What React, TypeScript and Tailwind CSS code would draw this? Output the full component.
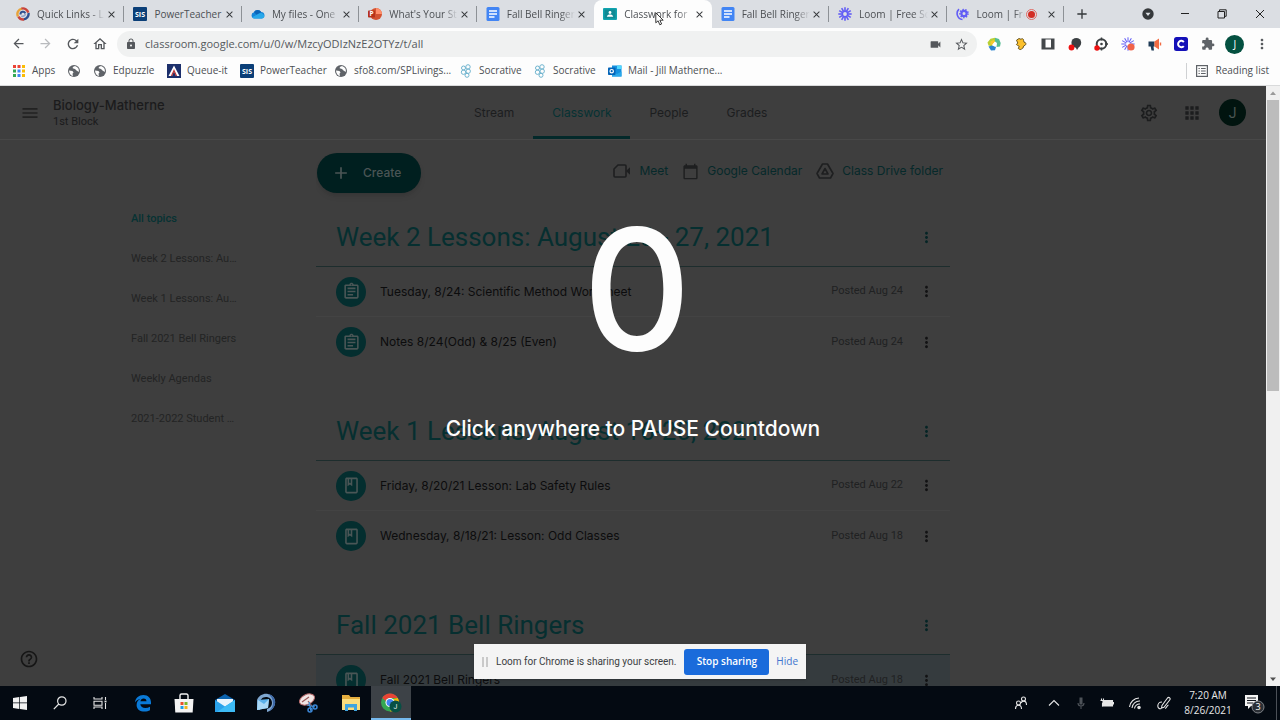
import type { ReactNode } from "react";
import {
  MdAdd,
  MdApps,
  MdArrowBack,
  MdArrowForward,
  MdCalendarToday,
  MdClose,
  MdExtension,
  MdHelpOutline,
  MdLock,
  MdMenu,
  MdMoreVert,
  MdOutlineAssignment,
  MdOutlineClass,
  MdOutlineHome,
  MdOutlineSettings,
  MdRefresh,
  MdStarBorder,
  MdVideocam,
} from "react-icons/md";

/* ---------- Favicons and brand marks ---------- */

function QuickLinksIcon() {
  return (
    <svg viewBox="0 0 14 14" className="size-[14px]" fill="none" strokeWidth="2.4">
      <path d="M2 9.5A5.5 5.5 0 0 1 6 1.6" stroke="#e8a33a" />
      <path d="M5.5 1.6a5.5 5.5 0 0 1 6.8 4" stroke="#c8443c" />
      <path d="M12.5 6a5.500 5.500 0 0 1-5 6.400" stroke="#2d4f8f" />
      <path d="M8 12.500a5.500 5.500 0 0 1-5.600-2.800" stroke="#c8443c" />
      <path d="M4.500 7.500a2.500 2.500 0 0 1 4.800-1.200" stroke="#2d4f8f" strokeWidth="2" />
      <path d="M9.300 7a2.500 2.500 0 0 1-4 1.800" stroke="#8fa4cc" strokeWidth="1.600" />
    </svg>
  );
}

function SisIcon() {
  return (
    <svg viewBox="0 0 14 14" className="size-[14px]">
      <rect width="14" height="14" rx="1" fill="#0b3f78" />
      <text x="7" y="9.500" textAnchor="middle" fontSize="7" fontWeight="700" fill="#fff" fontFamily="Open Sans, sans-serif">
        SIS
      </text>
    </svg>
  );
}

function OneDriveIcon() {
  return (
    <svg viewBox="0 0 14 14" className="size-[14px]">
      <path d="M3.500 11.500A3.200 3.200 0 0 1 3 5.200 4.200 4.200 0 0 1 10.200 5a3.300 3.300 0 0 1 .8 6.500z" fill="#1484d8" />
      <path d="M3 5.200A4.200 4.200 0 0 1 10.200 5L6 8z" fill="#0b64b8" />
      <path d="M1 10.200 8 6.600a3.500 3.500 0 0 1 5.300 3.400 2.600 2.600 0 0 1-2.300 1.500H3.500A3 3 0 0 1 1 10.200z" fill="#28a8ea" />
    </svg>
  );
}

function PowerPointIcon() {
  return (
    <svg viewBox="0 0 14 14" className="size-[14px]">
      <circle cx="8" cy="7" r="6" fill="#d35230" />
      <path d="M8 1a6 6 0 0 1 6 6H8z" fill="#ff8f6b" />
      <rect x="0" y="3.500" width="7" height="7" rx=".8" fill="#b7321a" />
      <text x="3.500" y="9.300" textAnchor="middle" fontSize="6.500" fontWeight="700" fill="#fff" fontFamily="Open Sans, sans-serif">
        P
      </text>
    </svg>
  );
}

function DocsIcon() {
  return (
    <svg viewBox="0 0 14 14" className="size-[14px]">
      <rect x=".5" width="13" height="14" rx="1.500" fill="#4285f4" />
      <path d="M3 4h8M3 7h8M3 10h5.500" stroke="#fff" strokeWidth="1.500" />
    </svg>
  );
}

function ClassroomIcon() {
  return (
    <svg viewBox="0 0 14 14" className="size-[14px]">
      <rect y="1" width="14" height="12" rx="1" fill="#12a4af" />
      <rect x="1.500" y="2.500" width="11" height="9" fill="#0f8a94" />
      <circle cx="7" cy="5.500" r="1.400" fill="#fff" />
      <path d="M3.800 9.800c.3-1.700 1.700-2.300 3.200-2.300s2.900.6 3.200 2.300z" fill="#fff" />
    </svg>
  );
}

const rays = [0, 30, 60, 90, 120, 150];

function LoomIcon() {
  return (
    <svg viewBox="0 0 14 14" className="size-[14px]" stroke="#625df5" strokeWidth="1.600">
      {rays.map((angle) => (
        <path key={angle} d="M7 .3v13.400" transform={`rotate(${angle} 7 7)`} />
      ))}
      <circle cx="7" cy="7" r="3.400" fill="#625df5" stroke="none" />
      <circle cx="7" cy="7" r="1.900" fill="#dee1e6" stroke="none" />
    </svg>
  );
}

function LoomSharingIcon() {
  return (
    <svg viewBox="0 0 14 14" className="size-[14px]" fill="none" stroke="#625df5">
      <path d="M3 2.200a6 6 0 0 0 3.500 10.300" strokeWidth="1.600" />
      <circle cx="8" cy="6.500" r="2.600" strokeWidth="2.200" />
      <circle cx="8" cy="6.500" r="4" strokeWidth="1.600" strokeDasharray="1.400 1.400" />
    </svg>
  );
}

function LoomExtensionIcon() {
  return (
    <svg viewBox="0 0 14 14" className="size-[14px]" stroke="#625df5" strokeWidth="1">
      {rays.map((angle) => (
        <path key={angle} d="M7 .3v13.400" transform={`rotate(${angle} 7 7)`} />
      ))}
      <circle cx="7" cy="7" r="2" fill="#fff" stroke="none" />
      <circle cx="10" cy="10" r="3.600" fill="#f0634a" stroke="none" />
    </svg>
  );
}

function AppsGridIcon() {
  const colours = ["#ea4335", "#ea4335", "#fbbc04", "#34a853", "#4285f4", "#fbbc04", "#34a853", "#4285f4", "#fbbc04"];
  return (
    <svg viewBox="0 0 12 12" className="size-3">
      {colours.map((colour, i) => (
        <rect key={i} x={(i % 3) * 4.5} y={Math.floor(i / 3) * 4.5} width="3" height="3" fill={colour} />
      ))}
    </svg>
  );
}

function QueueIcon() {
  return (
    <svg viewBox="0 0 14 14" className="size-[14px]">
      <rect width="14" height="14" fill="#1c2f6b" />
      <path d="M7 1.500 12.500 12H9L7 7 5 12H1.500z" fill="#fff" />
      <path d="m7 5 3.200 7H8.800L7 8l-1.800 4H3.800z" fill="#c03a3a" />
    </svg>
  );
}

function SocrativeIcon() {
  return (
    <svg viewBox="0 0 12 14" className="h-[14px] w-3" fill="none" stroke="#6fb4cf" strokeWidth="1">
      <circle cx="3.500" cy="4" r="2" />
      <circle cx="8" cy="2.900" r="2.200" />
      <circle cx="8.200" cy="7.200" r="2.200" />
      <circle cx="3.500" cy="8.200" r="2.200" />
      <circle cx="7" cy="11.300" r="2" />
    </svg>
  );
}

function OutlookIcon() {
  return (
    <svg viewBox="0 0 14 14" className="size-[14px]">
      <rect x="4" y="1.500" width="9.500" height="11" fill="#1490df" />
      <path d="M9 1.500h4.500V5H9z" fill="#50d9ff" />
      <path d="M4 7.500 9 10l4.500-2.500v5H4z" fill="#28a8ea" />
      <rect y="3.500" width="7.500" height="7.500" rx=".8" fill="#0364b8" />
      <circle cx="3.700" cy="7.200" r="1.700" fill="none" stroke="#fff" strokeWidth="1.200" />
    </svg>
  );
}

function ReadingListIcon() {
  return (
    <svg viewBox="0 0 12 12" className="size-3" fill="none" stroke="#5f6368">
      <rect x=".6" y=".6" width="10.800" height="10.800" strokeWidth="1.200" />
      <path d="M2.500 3.500h1.300M5 3.500h4.700M2.500 6h1.300M5 6h4.700M2.500 8.500h1.300M5 8.500h4.700" />
    </svg>
  );
}

/* ---------- Browser extensions ---------- */

const extensions: { name: string; icon: ReactNode }[] = [
  {
    name: "Color wheel",
    icon: (
      <svg viewBox="0 0 14 14" className="size-[14px]">
        <path d="M.5 5.500 3.500 1.800 8 .8 9 4 5.500 5.500 5 9.500 1.500 8.500z" fill="#b9cf35" />
        <path d="M8 .8 12 2l1.700 4-.7 3.500-3.500.5L10 6 8 4.500z" fill="#55bd93" />
        <path d="M1.500 9.500 5 8.500l4 1.500-1 3.200-4 .3z" fill="#2a83cf" />
        <path d="M3.500 4.500 6.500 3l1.500 1.500-2.500 3L3.500 8z" fill="#f7c832" />
        <path d="M5.500 7.500 8 5l1.500 3L7.500 9.500z" fill="#fff" />
      </svg>
    ),
  },
  {
    name: "Puzzle",
    icon: (
      <svg viewBox="0 0 14 14" className="size-[14px]">
        <path
          d="M2.500 3.200 5 1.500l2 .8c1-1.300 3-.3 2.600 1.300l.4 1.600c1.800-.3 2.600 2 1.200 3l-1.600.9-.6 2c-1.200.3-1.600 1.600-3 1.400l-1.700-1 .9-2.200c-.8-1-2.300-.7-2.800-1.800L3.800 6z"
          fill="#fbc02d"
          stroke="#5b4a16"
          strokeWidth=".9"
        />
      </svg>
    ),
  },
  {
    name: "Reader",
    icon: (
      <svg viewBox="0 0 14 14" className="size-[14px]">
        <path d="M.5 1.500h13v11H.5z" fill="#43474a" />
        <path d="M4.500 2.500h5.500v8H4.500z" fill="#fff" />
      </svg>
    ),
  },
  {
    name: "Mote",
    icon: (
      <svg viewBox="0 0 14 14" className="size-[14px]">
        <circle cx="8.300" cy="5.800" r="4.900" fill="#3c4043" />
        <path d="M7 9h4.500l-2.500 4z" fill="#3c4043" />
        <circle cx="3.500" cy="10.500" r="2.900" fill="#e11" />
      </svg>
    ),
  },
  {
    name: "Target",
    icon: (
      <svg viewBox="0 0 14 14" className="size-[14px]">
        <circle cx="7.500" cy="7" r="4.800" fill="none" stroke="#3c4043" strokeWidth="2" />
        <path d="M7.500.5v3M14 7h-3M7.500 13.500v-3" stroke="#3c4043" strokeWidth="1.500" />
        <circle cx="7.500" cy="7" r="1.300" fill="#3c4043" />
        <circle cx="3" cy="11" r="2.700" fill="#e11" />
      </svg>
    ),
  },
  { name: "Loom", icon: <LoomExtensionIcon /> },
  {
    name: "Megaphone",
    icon: (
      <svg viewBox="0 0 14 14" className="size-[14px]">
        <path d="M.5 4.500h6v5H5.500l.5 4H3.500l-.8-4H.5z" fill="#1f3b57" />
        <path d="M6.500 4.500 11 1.500v11L6.500 9.500z" fill="#f26b43" />
        <path d="M12.500 5.500v3" stroke="#f26b43" strokeWidth="1.400" />
      </svg>
    ),
  },
  {
    name: "Clever",
    icon: (
      <svg viewBox="0 0 14 14" className="size-[14px]">
        <rect width="14" height="14" rx="2.500" fill="#1410b8" />
        <path d="M9.800 5a3.200 3.200 0 1 0 0 4" fill="none" stroke="#fff" strokeWidth="2" />
      </svg>
    ),
  },
  { name: "Extensions", icon: <MdExtension className="size-[14px] text-[#5f6368]" /> },
];

/* ---------- Page icons ---------- */

function MeetIcon() {
  return (
    <svg viewBox="0 0 18 16" className="h-4 w-[18px] shrink-0" fill="none" stroke="#1e1f20" strokeWidth="1.600">
      <path d="M5 2h7a1 1 0 0 1 1 1v10a1 1 0 0 1-1 1H2a1 1 0 0 1-1-1V6z" />
      <path d="M13 8l4-3.800v7.600z" fill="#1e1f20" stroke="none" />
    </svg>
  );
}

function DriveIcon() {
  return (
    <svg viewBox="0 0 18 18" className="size-[18px] shrink-0" fill="none" stroke="#1e1f20" strokeWidth="1.600" strokeLinejoin="round">
      <path d="M6.500 2h5L17 11.500 14.500 16h-11L1 11.500z" />
      <path d="M9 6.500 12 12H6z" />
    </svg>
  );
}

/* ---------- Browser chrome ---------- */

const tabs: { title: string; icon: ReactNode; active?: boolean; divider?: boolean; recording?: boolean }[] = [
  { title: "Quick Links - L", icon: <QuickLinksIcon />, divider: true },
  { title: "PowerTeacher", icon: <SisIcon />, divider: true },
  { title: "My files - One", icon: <OneDriveIcon />, divider: true },
  { title: "What's Your St", icon: <PowerPointIcon />, divider: true },
  { title: "Fall Bell Ringer", icon: <DocsIcon /> },
  { title: "Classwork for", icon: <ClassroomIcon />, active: true },
  { title: "Fall Bell Ringer", icon: <DocsIcon />, divider: true },
  { title: "Loom | Free Sc", icon: <LoomIcon />, divider: true },
  { title: "Loom | Fre", icon: <LoomSharingIcon />, divider: true, recording: true },
];

function TabStrip() {
  return (
    <div className="flex h-7 shrink-0 items-stretch bg-[#dbdee3] pl-[7px]">
      <div role="tablist" className="flex min-w-0 max-w-[1057px] flex-1">
        {tabs.map((tab, i) => (
          <div
            key={i}
            role="tab"
            aria-selected={!!tab.active}
            className={`relative flex min-w-0 flex-1 items-center gap-px pr-[7px] pl-[9px] ${
              tab.active ? "rounded-t-lg bg-[#fdfdfd]" : ""
            }`}
          >
            <span className="mr-[6px] shrink-0">{tab.icon}</span>
            <span
              className={`min-w-0 flex-1 overflow-hidden whitespace-nowrap text-[#4c4f53] ${
                tab.title === "PowerTeacher" ? "" : "[mask-image:linear-gradient(to_right,#000_78%,transparent)]"
              }`}
            >
              {tab.title}
            </span>
            {tab.recording && (
              <span className="mr-2 flex size-[11px] shrink-0 items-center justify-center rounded-full border border-[#e06a63]">
                <span className="size-[7px] rounded-full bg-[#d22d24]" />
              </span>
            )}
            <button aria-label="Close tab" className="shrink-0 text-[#35383b]">
              <MdClose className="size-[11px]" />
            </button>
            {tab.divider && <span className="absolute top-[6px] right-0 h-4 w-px bg-[#8d9196]" />}
          </div>
        ))}
      </div>
      <button aria-label="New tab" className="ml-[10px] text-[#35383b]">
        <MdAdd className="size-4" />
      </button>
      <div className="ml-auto flex items-center">
        <button aria-label="Search tabs" className="flex w-[37px] justify-center">
          <svg viewBox="0 0 12 12" className="size-3">
            <circle cx="6" cy="6" r="5.700" fill="#35383b" />
            <path d="M3.500 4.800h5L6 8z" fill="#dbdee3" />
          </svg>
        </button>
        <button aria-label="Minimize" className="flex w-[37px] justify-center">
          <svg viewBox="0 0 10 10" className="size-[10px]" stroke="#222">
            <path d="M1 4.500h8" />
          </svg>
        </button>
        <button aria-label="Restore" className="flex w-[37px] justify-center">
          <svg viewBox="0 0 10 10" className="size-[10px]" fill="none" stroke="#222">
            <path d="M1 2.500h6.500v6.500H1zM2.500 2.500V.8h6.700v6.500H7.500" />
          </svg>
        </button>
        <button aria-label="Close window" className="flex w-10 justify-center">
          <svg viewBox="0 0 10 10" className="size-[10px]" stroke="#222">
            <path d="m1 1 8 8M9 1 1 9" />
          </svg>
        </button>
      </div>
    </div>
  );
}

function Toolbar() {
  return (
    <div className="flex h-8 shrink-0 items-center bg-[#fdfdfd] pl-[5px]">
      <div className="flex w-[112px] text-[#55585c]">
        <button aria-label="Back" className="flex w-[27px] justify-center">
          <MdArrowBack className="size-[15px]" />
        </button>
        <button aria-label="Forward" className="flex w-[27px] justify-center text-[#b9bbbe]">
          <MdArrowForward className="size-[15px]" />
        </button>
        <button aria-label="Reload" className="flex w-[27px] justify-center">
          <MdRefresh className="size-[16px]" />
        </button>
        <button aria-label="Home" className="flex w-[27px] justify-center">
          <MdOutlineHome className="size-[16px]" />
        </button>
      </div>
      <div className="flex h-[26px] min-w-0 flex-1 items-center rounded-full bg-[#f0f1f1] pr-2 pl-2">
        <MdLock className="size-3 shrink-0 text-[#55585c]" />
        <input
          aria-label="Address"
          className="ml-2 min-w-0 flex-1 bg-transparent text-[11px] text-[#55595d] outline-none"
          defaultValue="classroom.google.com/u/0/w/MzcyODIzNzE2OTYz/t/all"
        />
        <MdVideocam className="size-[13px] shrink-0 text-[#55585c]" />
        <button aria-label="Bookmark this page" className="ml-3 shrink-0 text-[#55585c]">
          <MdStarBorder className="size-[15px]" />
        </button>
      </div>
      <div className="mr-[5px] ml-1 grid w-[294px] shrink-0 grid-cols-11 items-center">
        {extensions.map((ext) => (
          <button key={ext.name} aria-label={ext.name} className="flex justify-center">
            {ext.icon}
          </button>
        ))}
        <button
          aria-label="Profile"
          className="flex size-[19px] items-center justify-center justify-self-center rounded-full bg-[#045040] text-[10px] text-white"
        >
          J
        </button>
        <button aria-label="Browser menu" className="flex justify-center text-[#55585c]">
          <MdMoreVert className="size-4" />
        </button>
      </div>
    </div>
  );
}

/* Shaded globe used for sites without a favicon */
const globe = (
  <svg viewBox="0 0 14 14" className="size-[14px]">
    <circle cx="7" cy="7" r="6" fill="#5f6368" />
    <path d="M2 6.500 5.500 7l1 1.500-1 1.300L6 12C3.800 11.700 2 9.500 2 6.500zM8 2c-1.500.5-2.500 1-2.300 2.200L8 5l1.500 1.500L11.800 8c.6-2.500-.8-5.200-3.800-6z" fill="#fdfdfd" />
  </svg>
);

const bookmarks: { label: string; icon: ReactNode; width: string }[] = [
  { label: "Apps", icon: <AppsGridIcon />, width: "w-[55px]" },
  { label: "", icon: globe, width: "w-[26px]" },
  { label: "Edpuzzle", icon: globe, width: "w-[74px]" },
  { label: "Queue-it", icon: <QueueIcon />, width: "w-[73px]" },
  { label: "PowerTeacher", icon: <SisIcon />, width: "w-[94px]" },
  { label: "sfo8.com/SPLivings...", icon: globe, width: "w-[125px]" },
  { label: "Socrative", icon: <SocrativeIcon />, width: "w-[74px]" },
  { label: "Socrative", icon: <SocrativeIcon />, width: "w-[75px]" },
  { label: "Mail - Jill Matherne...", icon: <OutlookIcon />, width: "w-[130px]" },
];

function BookmarksBar() {
  return (
    <div className="flex h-[26px] shrink-0 items-center border-b border-[#d9dadb] bg-[#fdfdfd] pb-1 pl-3 text-[#4c4f53]">
      {bookmarks.map((b, i) => (
        <a
          key={i}
          href="#bookmark"
          aria-label={b.label || "Bookmark"}
          className={`flex shrink-0 items-center gap-[6px] whitespace-nowrap ${b.width}`}
        >
          <span className="flex w-[14px] shrink-0 justify-center">{b.icon}</span>
          {b.label}
        </a>
      ))}
      <button className="ml-auto flex h-4 items-center gap-[7px] border-l border-[#cfd1d3] pr-[11px] pl-[9px] whitespace-nowrap">
        <ReadingListIcon />
        Reading list
      </button>
    </div>
  );
}

/* ---------- Classroom page ---------- */

function PageHeader() {
  const link = "flex items-center border-b-3 border-transparent px-[19px] pt-[3px]";
  return (
    <header className="flex h-[54px] shrink-0 border-b border-[#484848]">
      <div className="flex w-[455px] items-center pl-5">
        <button aria-label="Main menu" className="text-[#222]">
          <MdMenu className="size-5" />
        </button>
        <div className="ml-[13px] pt-px text-[#1b1b1c]">
          <h1 className="text-[13px] leading-[18px] font-medium">Biology-Matherne</h1>
          <p className="font-[Roboto,sans-serif] text-[11px] leading-4">1st Block</p>
        </div>
      </div>
      <nav className="flex text-xs text-[#1c1d1e]">
        <a href="#stream" className={link}>Stream</a>
        <a href="#classwork" className="flex items-center rounded-t-xs border-b-3 border-[#03292a] px-[19px] pt-[3px] text-[#063233]">
          Classwork
        </a>
        <a href="#people" className={link}>People</a>
        <a href="#grades" className={link}>Grades</a>
      </nav>
      <div className="ml-auto flex items-center pr-5 text-[#1c1d1e]">
        <button aria-label="Settings">
          <MdOutlineSettings className="size-5" />
        </button>
        <button aria-label="Google apps" className="ml-[23px]">
          <MdApps className="size-5" />
        </button>
        <button
          aria-label="Account"
          className="ml-[17px] flex size-[27px] items-center justify-center rounded-full bg-[#01140f] font-[Roboto,sans-serif] text-sm text-[#4a5653]"
        >
          J
        </button>
      </div>
    </header>
  );
}

type Item = { title: string; date: string; kind: "assignment" | "material"; highlighted?: boolean };

const topics: { title: string; items: Item[] }[] = [
  {
    title: "Week 2 Lessons: August 23 - 27, 2021",
    items: [
      { title: "Tuesday, 8/24: Scientific Method Worksheet", date: "Posted Aug 24", kind: "assignment" },
      { title: "Notes 8/24(Odd) & 8/25 (Even)", date: "Posted Aug 24", kind: "assignment" },
    ],
  },
  {
    title: "Week 1 Lessons: August 16-20, 2021",
    items: [
      { title: "Friday, 8/20/21 Lesson: Lab Safety Rules", date: "Posted Aug 22", kind: "material" },
      { title: "Wednesday, 8/18/21: Lesson: Odd Classes", date: "Posted Aug 18", kind: "material" },
    ],
  },
  {
    title: "Fall 2021 Bell Ringers",
    items: [{ title: "Fall 2021 Bell Ringers", date: "Posted Aug 18", kind: "material", highlighted: true }],
  },
];

function Topic({ title, items }: { title: string; items: Item[] }) {
  return (
    <section className="pb-[33px]">
      <div className="flex h-[61px] items-center justify-between border-b border-[#1d2d2d] pt-[2px] pr-[15px] pl-5">
        <h2 className="font-[Roboto,sans-serif] text-[26px] leading-9 whitespace-nowrap text-[#062f30]">{title}</h2>
        <button aria-label="Topic options" className="text-[#042425]">
          <MdMoreVert className="size-[17px]" />
        </button>
      </div>
      <ul>
        {items.map((item, i) => (
          <li
            key={i}
            className={`flex h-[50px] items-center pr-[15px] pl-5 ${item.highlighted ? "bg-[#353b3e]" : ""} ${
              i < items.length - 1 ? "border-b border-[#434343]" : ""
            }`}
          >
            <span className="flex size-[30px] shrink-0 items-center justify-center rounded-full bg-[#042e2f] text-[#4a5656]">
              {item.kind === "assignment" ? <MdOutlineAssignment className="size-[19px]" /> : <MdOutlineClass className="size-[19px]" />}
            </span>
            <span className="ml-[14px] min-w-0 flex-1 truncate text-xs text-[#0c0c0d]">{item.title}</span>
            <time className="font-[Roboto,sans-serif] text-[11px] text-[#202122]">{item.date}</time>
            <button aria-label="Item options" className="ml-[15px] text-[#121213]">
              <MdMoreVert className="size-[17px]" />
            </button>
          </li>
        ))}
      </ul>
    </section>
  );
}

const sideTopics = ["Week 2 Lessons: August 23 - 27, 2021", "Week 1 Lessons: August 16-20, 2021", "Fall 2021 Bell Ringers", "Weekly Agendas", "2021-2022 Student Information"];

function Classwork() {
  return (
    <div className="grid min-h-0 flex-1 grid-cols-[minmax(0,1fr)_minmax(0,634px)_minmax(0,1fr)]">
      <aside className="relative pt-[69px] pl-[131px] font-[Roboto,sans-serif] text-[11px] text-[#232424]">
        <a href="#all" className="flex h-5 w-[106px] items-center font-medium text-[#063233]">
          All topics
        </a>
        {sideTopics.map((topic) => (
          <a key={topic} href="#topic" className="mt-5 block h-5 w-[106px] truncate leading-5">
            {topic}
          </a>
        ))}
        <button aria-label="Help" className="absolute bottom-[17px] left-[19px] text-[#161616]">
          <MdHelpOutline className="size-5" />
        </button>
      </aside>
      <div className="min-w-0 overflow-hidden">
        <div className="flex items-start justify-between pt-[13px] pr-[7px]">
          <button className="ml-px flex h-10 w-[104px] items-center gap-3 rounded-full bg-[#001f1f] pl-[14px] text-xs font-medium text-[#4b5555] shadow-md">
            <MdAdd className="size-5" />
            Create
          </button>
          <div className="flex h-9 items-center gap-[14px] text-xs text-[#06292a]">
            <a href="#meet" className="flex items-center gap-2">
              <MeetIcon />
              Meet
            </a>
            <a href="#calendar" className="flex items-center gap-2">
              <MdCalendarToday className="size-[17px] text-[#1e1f20]" />
              Google Calendar
            </a>
            <a href="#drive" className="flex items-center gap-2">
              <DriveIcon />
              Class Drive folder
            </a>
          </div>
        </div>
        <div className="pt-[13px]">
          {topics.map((topic) => (
            <Topic key={topic.title} {...topic} />
          ))}
        </div>
      </div>
    </div>
  );
}

function Scrollbar() {
  return (
    <div className="flex w-[14px] shrink-0 flex-col items-center bg-[#f0f0f0]">
      <svg viewBox="0 0 14 14" className="size-[14px] shrink-0">
        <path d="M4 9h6L7 5.500z" fill="#9a9a9a" />
      </svg>
      <div className="h-[291px] w-3 bg-[#bcbcbc]" />
      <svg viewBox="0 0 14 14" className="mt-auto size-[14px] shrink-0">
        <path d="M4 5.500h6L7 9z" fill="#505050" />
      </svg>
    </div>
  );
}

function CountdownOverlay() {
  return (
    <div className="absolute inset-0 flex flex-col items-center pt-[103px] text-[#fdfdfd]">
      <p className="pl-2 text-[168px] leading-[200px] font-medium">0</p>
      <p className="mt-6 text-[21px] leading-8 font-medium whitespace-nowrap">Click anywhere to PAUSE Countdown</p>
    </div>
  );
}

function SharingBar() {
  return (
    <div className="absolute bottom-[7px] left-1/2 flex h-[35px] w-[332px] -translate-x-1/2 items-center bg-[#f4f4f4] pl-2 font-['Open_Sans','Noto_Sans',sans-serif] text-[10px] text-[#3b3e42] shadow">
      <svg viewBox="0 0 6 10" className="h-[10px] w-[6px] shrink-0" stroke="#c9c9c9" strokeWidth="2">
        <path d="M1 0v10M5 0v10" />
      </svg>
      <span className="ml-2 font-[Roboto,sans-serif] whitespace-nowrap">Loom for Chrome is sharing your screen.</span>
      <button className="ml-auto h-[26px] w-[85px] shrink-0 rounded-[3px] bg-[#1a6bdb] font-semibold whitespace-nowrap text-white">
        Stop sharing
      </button>
      <button className="mr-2 ml-[7px] text-[#3f74cf]">Hide</button>
    </div>
  );
}

/* ---------- Windows taskbar ---------- */

const taskbarApps: { name: string; width: string; icon: ReactNode; active?: boolean }[] = [
  {
    name: "Start",
    width: "w-10",
    icon: (
      <svg viewBox="0 0 14 14" className="size-[14px]" fill="#f2f2f2">
        <path d="M0 2 6.300 1v5.600H0zM7 .9 14 0v6.600H7zM0 7.300h6.300V13L0 12zM7 7.300h7V14l-7-1z" />
      </svg>
    ),
  },
  {
    name: "Search",
    width: "w-10",
    icon: (
      <svg viewBox="0 0 14 14" className="size-[14px]" fill="none" stroke="#e6e6e6" strokeWidth="1.200">
        <circle cx="8.800" cy="5" r="4.200" />
        <path d="M5.800 8 .8 13.200" />
      </svg>
    ),
  },
  {
    name: "Task view",
    width: "w-10",
    icon: (
      <svg viewBox="0 0 14 14" className="size-[14px]" fill="none" stroke="#e6e6e6" strokeWidth="1.100">
        <path d="M1 1v2h8V1M1 5.200h8v4H1zM1 13v-2h8v2M12.500 1v3M12.500 7v6" />
        <path d="M11.500 5.500h2" strokeWidth="1.800" />
      </svg>
    ),
  },
  {
    name: "Edge",
    width: "w-[45px]",
    icon: (
      <svg viewBox="0 0 18 18" className="size-[18px]">
        <path
          d="M1 8.500C1.500 3.800 5 1 9.300 1c5 0 7.700 3.500 7.700 7.300v2H6.300c.2 2.500 2.400 3.600 5 3.600 1.800 0 3.400-.4 4.700-1.200v3.600c-1.500.8-3.300 1.300-5.400 1.300-4.600 0-8-2.500-8-6.700 0-3 1.700-5.200 4.200-6.100C4.600 5.300 2.200 6.300 1 8.500zm5.400-1.200h6.100c0-1.800-1-2.900-2.900-2.900-1.700 0-2.900 1.100-3.200 2.900z"
          fill="#0a7ad8"
        />
      </svg>
    ),
  },
  {
    name: "Store",
    width: "w-[37px]",
    icon: (
      <svg viewBox="0 0 20 20" className="size-5">
        <path d="M6 6V2.500A1.500 1.500 0 0 1 7.500 1h5A1.500 1.500 0 0 1 14 2.500V6" fill="none" stroke="#f4f4f4" strokeWidth="1.400" />
        <path d="M.5 6h19l-.8 13.500H1.300z" fill="#f4f4f4" />
        <path d="M6.500 9h3v3h-3z" fill="#e8502c" />
        <path d="M10.500 9h3v3h-3z" fill="#7cb92a" />
        <path d="M6.500 13h3v3h-3z" fill="#1d9fe4" />
        <path d="M10.500 13h3v3h-3z" fill="#f4b41a" />
      </svg>
    ),
  },
  {
    name: "Mail",
    width: "w-[45px]",
    icon: (
      <svg viewBox="0 0 20 18" className="h-[18px] w-5">
        <path d="m0 6 10-6 10 6v12H0z" fill="#0b62ad" />
        <path d="M2 5h16v8H2z" fill="#e9f4fc" />
        <path d="m0 6 10 6.500L20 6v12H0z" fill="#2aa2ea" />
        <path d="M10 12.500 20 6v12H2z" fill="#3dbbf5" />
      </svg>
    ),
  },
  {
    name: "Pen tool",
    width: "w-[38px]",
    icon: (
      <svg viewBox="0 0 20 20" className="size-5">
        <path d="M1 17V7C3 2 8 0 12 1c5 1 8 5 7 10-1 4-4 7-8 8v-3c3-1 5-3 5-6 0-4-3-6-6-6-4 0-6 3-6 6v7z" fill="#7fa6cf" />
        <path d="m2 7 11-1-1 9-11 2z" fill="#59b0ea" />
        <path d="m2 7 6 4 5-5-1 9-11 2z" fill="#a9d8f6" />
        <path d="M12 1c5 1 8 5 7 10-.6 3-3 6-6 7 3-3 4-5 4-8 0-4-2-7-5-9z" fill="#3c67a6" />
      </svg>
    ),
  },
  {
    name: "Snipping tool",
    width: "w-[45px]",
    icon: (
      <svg viewBox="0 0 20 20" className="size-5">
        <ellipse cx="9" cy="6.500" rx="8" ry="5" transform="rotate(-25 9 6.500)" fill="#f0e5e4" stroke="#b56a6a" />
        <path d="m4 9 7-5M10 8l4 5" stroke="#9a5a5a" strokeWidth="1.200" />
        <path d="m11 9 2 9M9 12l8 2" stroke="#4b9be0" strokeWidth="1.200" />
        <circle cx="12" cy="17" r="2" fill="none" stroke="#3b86d6" strokeWidth="1.500" />
        <circle cx="17" cy="14" r="2" fill="none" stroke="#3b86d6" strokeWidth="1.500" />
      </svg>
    ),
  },
  {
    name: "File Explorer",
    width: "w-[41px]",
    icon: (
      <svg viewBox="0 0 20 18" className="h-[18px] w-5">
        <path d="M1 1h7l1.500 2H19v13H1z" fill="#e5ae3e" />
        <path d="M1 5h18v11H1z" fill="#fbdd7d" />
        <path d="M4 10h12v7h-3v-3.500H7V17H4z" fill="#3fa4df" />
      </svg>
    ),
  },
  {
    name: "Chrome",
    width: "w-10",
    active: true,
    icon: (
      <svg viewBox="0 0 22 20" className="h-5 w-[22px]">
        <circle cx="10" cy="9.500" r="9" fill="#34a853" />
        <path d="M10 .5a9 9 0 0 1 7.800 4.500H10a4.500 4.500 0 0 0-4.200 3L2.200 5A9 9 0 0 1 10 .5z" fill="#ea4335" />
        <path d="M17.800 5A9 9 0 0 1 10 18.500l3.900-6.800A4.500 4.500 0 0 0 13 6z" fill="#fbbc04" />
        <circle cx="10" cy="9.500" r="4.500" fill="#fff" />
        <circle cx="10" cy="9.500" r="3.500" fill="#4285f4" />
        <circle cx="15.500" cy="13.500" r="6" fill="#075044" />
        <text x="15.500" y="16" textAnchor="middle" fontSize="7" fill="#e0ece9" fontFamily="Roboto, sans-serif">
          J
        </text>
      </svg>
    ),
  },
];

const trayIcons: { name: string; width: string; icon: ReactNode }[] = [
  {
    name: "People",
    width: "w-[36px]",
    icon: (
      <>
        <circle cx="4.500" cy="7" r="2" />
        <path d="M1.500 13c0-2.500 1.500-3.800 3-3.800s3 1.300 3 3.800" />
        <circle cx="9.500" cy="3" r="2" />
        <path d="M7 7c.6-1.400 1.500-1.900 2.500-1.900 1.700 0 3 1.300 3 3.800" />
      </>
    ),
  },
  { name: "Show hidden icons", width: "w-[30px]", icon: <path d="m2 9.500 5-5 5 5" /> },
  {
    name: "Microphone",
    width: "w-[24px]",
    icon: (
      <g stroke="#4d5258">
        <path d="M7 1.500v7" strokeWidth="3" />
        <path d="M4 7c0 4 6 4 6 0M7 10v3" />
      </g>
    ),
  },
  {
    name: "Battery",
    width: "w-[28px]",
    icon: (
      <>
        <path d="M3 4.500h9.500v5.500H3z" fill="#e6e6e6" />
        <path d="M13.500 6v2.500M1.500 2.500v2M3.500 2.500v2M.5 4.500h4v1.500l-2 1.500v3" />
      </>
    ),
  },
  {
    name: "Wi-Fi",
    width: "w-[27px]",
    icon: (
      <>
        <path d="M1.500 11A10 10 0 0 1 11 2M4 12a7.500 7.500 0 0 1 8-7M6.500 12.500A5 5 0 0 1 12 8" />
        <circle cx="11" cy="11.500" r="1.200" fill="#e6e6e6" />
      </>
    ),
  },
  {
    name: "Pen",
    width: "w-[32px]",
    icon: (
      <>
        <path d="M5 9.500 10.500 2c1.500-1.500 3.500.3 2.200 2L7 11.300 4.500 12z" />
        <path d="M5 6C2 6 .8 8 .8 10s1.500 3.200 3.500 2.500M8 12.500c2-.5 1.500-3 3.500-3.500" />
      </>
    ),
  },
];

function Taskbar() {
  return (
    <footer className="flex h-[34px] shrink-0 items-stretch bg-[#040a12] font-['Open_Sans','Noto_Sans',sans-serif] text-[10px] text-[#e8e8e8]">
      {taskbarApps.map((app) => (
        <button
          key={app.name}
          aria-label={app.name}
          className={`flex items-center justify-center ${app.width} ${app.active ? "border-b-2 border-[#76b9ed] bg-[#3d4247] pt-[2px]" : ""}`}
        >
          {app.icon}
        </button>
      ))}
      <div className="ml-auto flex items-center">
        {trayIcons.map((tray) => (
          <button key={tray.name} aria-label={tray.name} className={`flex justify-center ${tray.width}`}>
            <svg viewBox="0 0 14 14" className="size-[14px]" fill="none" stroke="#e6e6e6" strokeWidth="1.100">
              {tray.icon}
            </svg>
          </button>
        ))}
        <div className="w-[56px] text-center leading-[15px] whitespace-nowrap">
          <div>7:20 AM</div>
          <div>8/26/2021</div>
        </div>
        <button aria-label="Notifications" className="mr-[3px] flex w-[36px] justify-center">
          <svg viewBox="0 0 22 22" className="size-[22px]">
            <path d="M2 3h13v11H8l-3 3v-3H2z" fill="#f4f4f4" />
            <path d="M4 6h9M4 8.500h9M4 11h6" stroke="#10151c" />
            <circle cx="15" cy="15" r="6" fill="#2b2f35" stroke="#7f8388" />
            <text x="15" y="18" textAnchor="middle" fontSize="9" fill="#fff" fontFamily="Open Sans, sans-serif">
              3
            </text>
          </svg>
        </button>
        <span className="mr-[3px] ml-px h-[34px] w-px bg-[#4b5057]" />
      </div>
    </footer>
  );
}

function Pointer() {
  return (
    <svg viewBox="0 0 10 14" className="pointer-events-none absolute top-3 left-[655px] h-[14px] w-[10px]">
      <path d="M.8.8v10l2.300-2 1.700 4 1.800-.8-1.700-3.800h3.300z" fill="#fff" stroke="#222" strokeWidth=".9" />
    </svg>
  );
}

export default function App() {
  return (
    <div className="relative flex h-screen flex-col overflow-hidden">
      <div className="shrink-0 font-['Open_Sans','Noto_Sans',sans-serif] text-[10px]">
        <TabStrip />
        <Toolbar />
        <BookmarksBar />
      </div>
      <div className="relative flex min-h-0 flex-1">
        <main className="relative flex min-w-0 flex-1 flex-col overflow-hidden bg-[#3e3e3e] font-[Inter,sans-serif]">
          <PageHeader />
          <Classwork />
          <CountdownOverlay />
        </main>
        <Scrollbar />
        <SharingBar />
      </div>
      <Taskbar />
      <Pointer />
    </div>
  );
}
